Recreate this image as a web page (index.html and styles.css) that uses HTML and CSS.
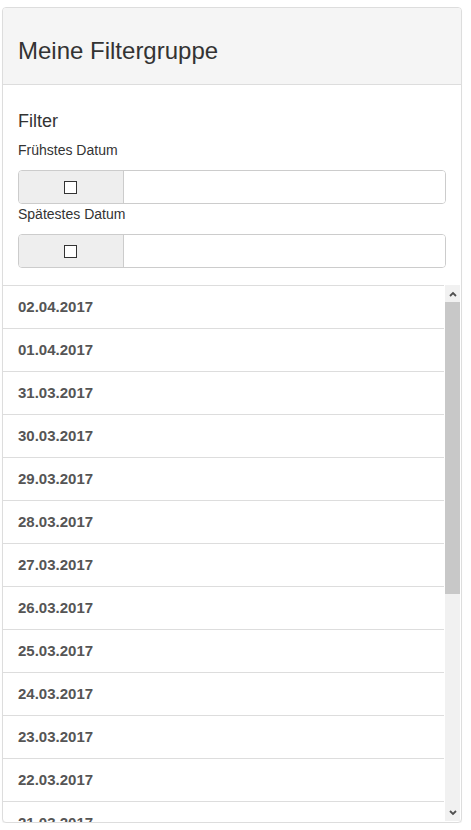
FILE: index.html
```html
<!DOCTYPE html>
<html lang="de">
<head>
<meta charset="utf-8">
<title>Meine Filtergruppe</title>
<link rel="stylesheet" href="styles.css">
</head>
<body>
<div class="panel">
  <div class="panel-heading">
    <h3 class="panel-title">Meine Filtergruppe</h3>
  </div>
  <div class="panel-body">
    <h4 class="section-title">Filter</h4>
    <label class="field-label">Frühstes Datum</label>
    <div class="input-group">
      <span class="addon"><span class="check"></span></span>
      <span class="input"></span>
    </div>
    <label class="field-label">Spätestes Datum</label>
    <div class="input-group">
      <span class="addon"><span class="check"></span></span>
      <span class="input"></span>
    </div>
  </div>
  <div class="list-wrap">
    <div class="list">
      <div class="item">02.04.2017</div>
      <div class="item">01.04.2017</div>
      <div class="item">31.03.2017</div>
      <div class="item">30.03.2017</div>
      <div class="item">29.03.2017</div>
      <div class="item">28.03.2017</div>
      <div class="item">27.03.2017</div>
      <div class="item">26.03.2017</div>
      <div class="item">25.03.2017</div>
      <div class="item">24.03.2017</div>
      <div class="item">23.03.2017</div>
      <div class="item">22.03.2017</div>
      <div class="item">21.03.2017</div>
      <div class="item">20.03.2017</div>
    </div>
    <div class="scrollbar">
      <div class="sb-btn">
        <svg width="8" height="6" viewBox="0 0 8 6"><polyline points="1,5 4,2 7,5" fill="none" stroke="#505050" stroke-width="1.8"/></svg>
      </div>
      <div class="sb-track"><div class="sb-thumb"></div></div>
      <div class="sb-btn">
        <svg width="8" height="6" viewBox="0 0 8 6"><polyline points="1,1 4,4 7,1" fill="none" stroke="#505050" stroke-width="1.8"/></svg>
      </div>
    </div>
  </div>
</div>
</body>
</html>
```

FILE: styles.css
```css
html, body {
  margin: 0;
  padding: 0;
  background: #fff;
}
body {
  padding: 7px 9px 0 2px;
  font-family: "Liberation Sans", Arial, sans-serif;
  font-size: 14px;
  line-height: 20px;
  color: #333;
}
.panel {
  width: 460px;
  box-sizing: border-box;
  border: 1px solid #ddd;
  border-radius: 4px;
  box-shadow: 0 1px 1px rgba(0,0,0,0.05);
  overflow: hidden;
  background: #fff;
}
.panel-heading {
  background: #f5f5f5;
  border-bottom: 1px solid #ddd;
  padding: 10px 15px;
}
.panel-title {
  margin: 20px 0 10px;
  font-size: 24px;
  line-height: 26.4px;
  font-weight: 500;
  color: #333;
}
.panel-body {
  padding: 15px 15px 17px;
}
.section-title {
  margin: 12px 0 8px;
  font-size: 18px;
  line-height: 19.8px;
  font-weight: 500;
}
.field-label {
  display: block;
  margin-bottom: 10px;
  font-weight: normal;
}
.input-group {
  display: flex;
  height: 34px;
  box-sizing: border-box;
  border: 1px solid #ccc;
  border-radius: 4px;
  overflow: hidden;
}
.addon {
  width: 104px;
  background: #eee;
  border-right: 1px solid #ccc;
  display: flex;
  align-items: center;
  justify-content: center;
}
.check {
  width: 11px;
  height: 11px;
  border: 1px solid #333;
  background: #fff;
  margin-left: -1px;
}
.input {
  flex: 1;
  background: #fff;
}
.list-wrap {
  display: flex;
  height: 537px;
}
.list {
  flex: 1;
  overflow: hidden;
}
.item {
  border-top: 1px solid #ddd;
  padding: 10px 15px;
  line-height: 22px;
  font-size: 15px;
  font-weight: bold;
  color: #555;
}
.scrollbar {
  width: 15px;
  margin: 0 1px 1px 1px;
  display: flex;
  flex-direction: column;
  background: #f1f1f1;
}
.sb-btn {
  height: 17px;
  display: flex;
  align-items: center;
  justify-content: center;
}
.sb-track {
  flex: 1;
}
.sb-thumb {
  height: 292px;
  background: #c8c8c8;
}
```
